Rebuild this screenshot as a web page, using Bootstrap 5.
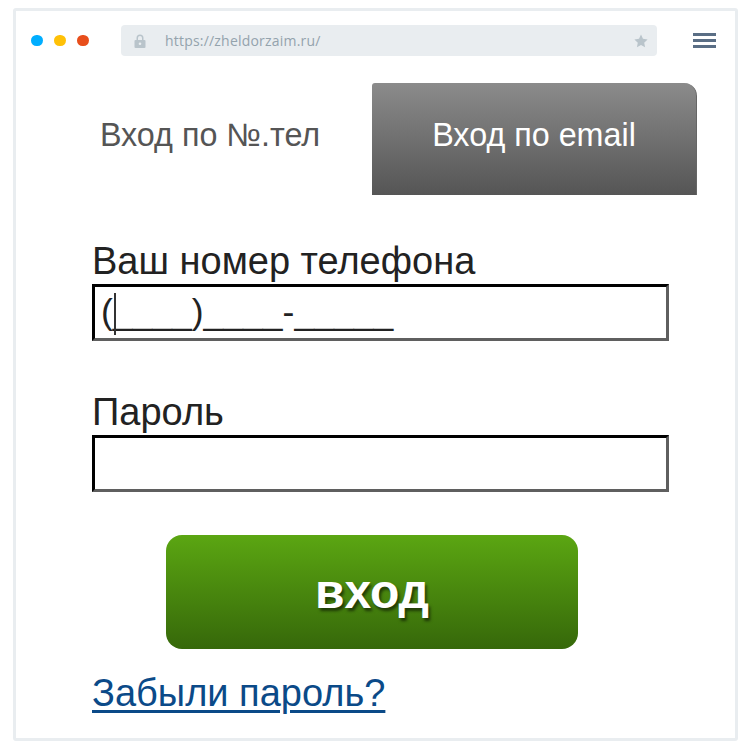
<!DOCTYPE html>
<html lang="ru">
<head>
<meta charset="utf-8">
<title>Вход</title>
<link href="https://cdn.jsdelivr.net/npm/bootstrap@5.3.0/dist/css/bootstrap.min.css" rel="stylesheet">
<style>
html,body{background:#fff;margin:0;height:751px;overflow:hidden}
body{font-family:"Liberation Sans",Arial,sans-serif}
.frame{margin:8px 0 0 13px;width:725px;height:733px;border:3px solid #e9edf0;border-radius:3px;background:#fff}
.toolbar{height:72px;padding:14px 21px 0 15px}
.dotx{width:11.5px;height:11.5px;border-radius:50%;flex:none}
.dots{gap:11.5px;width:90px;height:31px;flex:none}
.addr{width:536px;height:31px;background:#e9edf0;border-radius:4px;padding:0 9px 0 13px;font-family:"Open Sans",sans-serif;font-size:14px;color:#94a3ad;letter-spacing:.2px;flex:none}
.addr span{margin-left:19px}
.burger{width:23px;height:31px;margin-left:36px;gap:3.5px;flex:none}
.burger i{display:block;height:2.5px;background:#5a6e85}
.tabs{padding-left:53px;width:681px}
.tab-a,.tab-b{height:112px;font-size:32.3px;display:flex;align-items:center;justify-content:center;padding-bottom:8px}
.tab-a{width:303px;color:#555;padding-right:21px}
.tab-b{width:325px;color:#fff;background:linear-gradient(#8b8b8b,#555);border-top-right-radius:13px;border-top-left-radius:3px;border-right:1px solid #666}
.formarea{padding:0 0 0 76px;width:653px}
.lbl{font-size:38px;line-height:42px;color:#222;margin:0 0 2px;display:block}
.lbl-first{margin-top:45px}
.lbl-next{margin-top:50px}
.fld{width:577px;height:57px;border-style:solid;border-width:3px;border-color:#000 #5f5f5f #5f5f5f #000;border-radius:0;padding:0 6px;font-family:inherit;font-size:35.5px;color:#222;background:#fff;box-shadow:none;line-height:1}
.fld:focus{border-color:#000 #5f5f5f #5f5f5f #000;box-shadow:none}
.cursor{position:absolute;left:22px;top:9px;width:2px;height:42px;background:#333}
.go{width:412px;height:114px;margin:43px 0 0 74px;border-radius:16px;border:0;background:linear-gradient(#5ba612,#36680a);color:#fff;font-weight:700;font-size:48px;text-shadow:2px 3px 3px rgba(0,0,0,.55);display:flex;align-items:center;justify-content:center;padding:0}
.forgot{display:inline-block;font-size:38px;line-height:42px;color:#0b4a88;margin-top:23px;text-decoration-thickness:3px;text-underline-offset:4px}
</style>
</head>
<body>
<div class="frame">
  <div class="toolbar d-flex">
    <div class="dots d-flex align-items-center">
      <div class="dotx" style="background:#00aeff"></div>
      <div class="dotx" style="background:#ffc107"></div>
      <div class="dotx" style="background:#e84e1b"></div>
    </div>
    <div class="addr d-flex align-items-center">
      <svg width="12" height="14" viewBox="0 0 12 14"><path d="M2.5 6V4a3.5 3.5 0 0 1 7 0v2H8V4a2 2 0 0 0-4 0v2z" fill="#b9c4cb"/><rect x="0.5" y="6" width="11" height="8" rx="1" fill="#b9c4cb"/><circle cx="6" cy="9.7" r="1.3" fill="#e9edf0"/></svg>
      <span>https://zheldorzaim.ru/</span>
      <svg class="ms-auto" width="14" height="14" viewBox="0 0 24 24"><path d="M12 1l3.4 7.3 7.9 1-5.8 5.5 1.5 7.9L12 18.8l-7 3.9 1.5-7.9L.7 9.3l7.9-1z" fill="#b9c4cb"/></svg>
    </div>
    <div class="burger d-flex flex-column justify-content-center"><i></i><i></i><i></i></div>
  </div>
  <div class="tabs d-flex">
    <div class="tab-a">Вход по №.тел</div>
    <div class="tab-b">Вход по email</div>
  </div>
  <form class="formarea">
    <label class="lbl lbl-first">Ваш номер телефона</label>
    <div class="position-relative">
      <input class="form-control fld" type="text" value="(____)____-_____">
      <div class="cursor"></div>
    </div>
    <label class="lbl lbl-next">Пароль</label>
    <input class="form-control fld" type="password">
    <button class="btn go" type="button">вход</button>
    <a class="forgot" href="#">Забыли пароль?</a>
  </form>
</div>
<script src="https://cdn.jsdelivr.net/npm/bootstrap@5.3.0/dist/js/bootstrap.bundle.min.js"></script>
</body>
</html>
